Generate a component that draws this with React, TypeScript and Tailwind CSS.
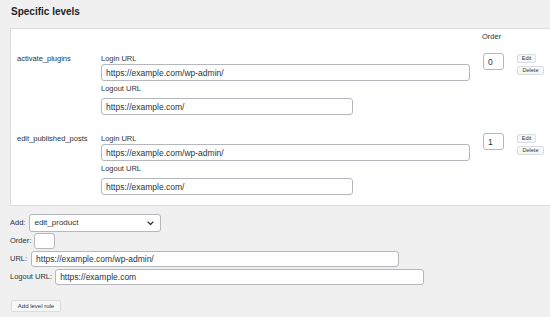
import React from 'react'

interface LevelRow {
  capability: string
  loginUrl: string
  logoutUrl: string
  order: string
}

const rows: LevelRow[] = [
  { capability: 'activate_plugins', loginUrl: 'https://example.com/wp-admin/', logoutUrl: 'https://example.com/', order: '0' },
  { capability: 'edit_published_posts', loginUrl: 'https://example.com/wp-admin/', logoutUrl: 'https://example.com/', order: '1' },
]

const inputCls =
  'block bg-white border border-[#b4b7bb] rounded-[3px] text-[8.5px] leading-none text-[#2c3338] px-[4px] outline-none'

function SmallButton({ children, className = '' }: { children: React.ReactNode; className?: string }) {
  return (
    <button
      className={`flex items-center justify-center bg-[#f6f7f7] border border-[#dcdcde] rounded-[2px] text-[5.5px] leading-none text-[#2c3338] ${className}`}
    >
      {children}
    </button>
  )
}

export default function App() {
  return (
    <div className="w-[550px] h-[317px] overflow-hidden bg-[#f0f0f1] pl-[10px] leading-none font-['Liberation_Sans',Arial,sans-serif] text-[#2c3338]">
      <h2 className="pt-[5px] pl-[1px] h-[28px] leading-[14px] text-[10px] font-bold text-[#1d2327]">Specific levels</h2>

      {/* table panel */}
      <div className="w-[550px] bg-white border border-[#dcdcde] pt-[3px] pb-[10px] pl-[6px]">
        <div className="flex h-[10px] leading-[10px] text-[7.5px]">
          <div className="w-[84px]" />
          <div className="w-[381px]" />
          <div className="w-[35px]">Order</div>
        </div>

        {rows.map((row, i) => (
          <div key={row.capability} className={`flex items-start ${i === 0 ? 'mt-[11px]' : 'mt-[18px]'}`}>
            <div className="w-[84px] pt-[1px] leading-[10px] text-[7.5px]">{row.capability}</div>
            <div className="w-[381px] pt-[1px]">
              <div className="h-[10px] leading-[10px] text-[7.5px]">Login URL</div>
              <input readOnly value={row.loginUrl} className={`${inputCls} w-[369px] h-[17px]`} />
              <div className="mt-[3px] h-[10px] leading-[10px] text-[7.5px]">Logout URL</div>
              <input readOnly value={row.logoutUrl} className={`${inputCls} mt-[4px] w-[252px] h-[17px]`} />
            </div>
            <div className="w-[35px]">
              <input readOnly value={row.order} className={`${inputCls} ml-[1px] w-[21px] h-[17px]`} />
            </div>
            <div className="flex flex-col items-start gap-[3px] pt-[1px]">
              <SmallButton className="w-[19px] h-[9px]">Edit</SmallButton>
              <SmallButton className="w-[27px] h-[9px]">Delete</SmallButton>
            </div>
          </div>
        ))}
      </div>

      {/* add form */}
      <div className="mt-[7px] flex flex-col text-[7.5px]">
        <div className="flex items-center gap-[4px] h-[19px]">
          <span>Add:</span>
          <div className="relative flex items-center w-[132px] h-[18px] bg-white border border-[#b4b7bb] rounded-[3px] pl-[4px] text-[8px] text-[#2c3338]">
            edit_product
            <svg className="absolute right-[6px] top-[6px]" width="7" height="5" viewBox="0 0 7 5" fill="none">
              <path d="M1 1l2.5 2.5L6 1" stroke="#2c3338" strokeWidth="1.2" strokeLinecap="round" strokeLinejoin="round" />
            </svg>
          </div>
        </div>
        <div className="flex items-center gap-[3px] h-[18px]">
          <span>Order:</span>
          <input readOnly value="" className={`${inputCls} w-[21px] h-[16px]`} />
        </div>
        <div className="flex items-center gap-[4px] h-[18px]">
          <span>URL:</span>
          <input readOnly value="https://example.com/wp-admin/" className={`${inputCls} w-[368px] h-[16px]`} />
        </div>
        <div className="flex items-center gap-[3px] h-[18px]">
          <span>Logout URL:</span>
          <input readOnly value="https://example.com" className={`${inputCls} w-[369px] h-[16px]`} />
        </div>
        <div className="mt-[14px] pl-[1px]">
          <SmallButton className="w-[50px] h-[12px] text-[6px]">Add level rule</SmallButton>
        </div>
      </div>
    </div>
  )
}
